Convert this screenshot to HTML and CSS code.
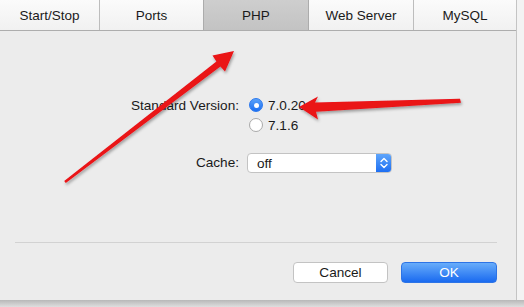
FILE: index.html
```html
<!DOCTYPE html>
<html>
<head>
<meta charset="utf-8">
<link rel="stylesheet" href="styles.css">
</head>
<body>
<div class="stage">
  <div class="window">
    <div class="tabs">
      <div class="tab t1">Start/Stop</div>
      <div class="tab t2">Ports</div>
      <div class="tab t3 selected">PHP</div>
      <div class="tab t4">Web Server</div>
      <div class="tab t5">MySQL</div>
    </div>
    <div class="content">
      <div class="form">
        <div class="label">Standard Version:</div>
        <div class="radios">
          <div class="radio-row"><span class="radio on"></span><span>7.0.20</span></div>
          <div class="radio-row"><span class="radio"></span><span>7.1.6</span></div>
        </div>
        <div class="label cache-label">Cache:</div>
        <div class="select">
          <span class="select-text">off</span>
          <span class="stepper">
            <svg width="16" height="20" viewBox="0 0 16 20"><path d="M5 8.5 L8 5.5 L11 8.5 M5 11.5 L8 14.5 L11 11.5" fill="none" stroke="#fff" stroke-width="1.4" stroke-linecap="round" stroke-linejoin="round"/></svg>
          </span>
        </div>
      </div>
    </div>
    <div class="divider"></div>
    <div class="buttons">
      <div class="btn cancel">Cancel</div>
      <div class="btn ok">OK</div>
    </div>
  </div>
  <div class="shadow"></div>
</div>
<svg class="arrows" width="524" height="307" viewBox="0 0 524 307">
  <defs>
    <filter id="ds" x="-10%" y="-10%" width="130%" height="130%">
      <feDropShadow dx="1" dy="2" stdDeviation="1.5" flood-color="#000" flood-opacity="0.35"/>
    </filter>
  </defs>
  <polygon filter="url(#ds)" fill="#ea1219" points="234,51 212.5,55.5 216.4,61.5 64.2,181 65.8,183 220.4,66.5 225,71.5"/>
  <polygon filter="url(#ds)" fill="#ea1219" points="299,107 318,96.5 315,102.5 460,98.8 461,102.8 316,111.8 318,119.5"/>
</svg>
</body>
</html>
```

FILE: styles.css
```css
html, body {
  margin: 0;
  padding: 0;
}
body {
  width: 524px;
  height: 307px;
  overflow: hidden;
  background: #f3f3f3;
  font-family: "Liberation Sans", Arial, sans-serif;
  font-size: 13.6px;
  color: #1a1a1a;
  position: relative;
}
.stage {
  display: flex;
  flex-direction: column;
  height: 307px;
}
.window {
  width: 516px;
  height: 300px;
  border-right: 1px solid #c4c4c4;
  background: #ececec;
  display: flex;
  flex-direction: column;
}
.shadow {
  flex: 1;
  width: 524px;
  background: linear-gradient(#b8b8b8, #dedede);
}
.tabs {
  display: flex;
  height: 30px;
  border-bottom: 1px solid #adadad;
  font-size: 13.5px;
}
.tab {
  display: flex;
  align-items: center;
  justify-content: center;
  background: linear-gradient(#fbfbfb, #f1f1f1);
  border-left: 1px solid #bdbdbd;
  box-sizing: border-box;
}
.t1 { width: 99px; border-left: none; }
.t2 { width: 104px; }
.t3 { width: 105px; }
.t4 { width: 105px; }
.t5 { flex: 1; }
.tab.selected {
  background: linear-gradient(#cecece, #c3c3c3);
  border-left-color: #acacac;
}
.tab.selected + .tab {
  border-left-color: #acacac;
}
.content {
  flex: 1;
  padding-top: 64px;
}
.form {
  display: grid;
  grid-template-columns: 239px auto;
  column-gap: 8px;
  row-gap: 18px;
  align-items: start;
}
.label {
  text-align: right;
  line-height: 20px;
  margin-top: 1px;
}
.cache-label {
  margin-top: 0;
}
.radios {
  display: flex;
  flex-direction: column;
}
.radio-row {
  display: flex;
  align-items: center;
  height: 20px;
  gap: 5px;
  padding-left: 2px;
}
.radio {
  width: 14px;
  height: 14px;
  box-sizing: border-box;
  border-radius: 50%;
  background: #fff;
  border: 1px solid #a9a9a9;
  display: flex;
  align-items: center;
  justify-content: center;
}
.radio.on {
  background: linear-gradient(#5ba2f9, #1c6ff2);
  border-color: #2a78ee;
}
.radio.on::after {
  content: "";
  width: 5px;
  height: 5px;
  border-radius: 50%;
  background: #fff;
}
.select {
  width: 145px;
  height: 20px;
  box-sizing: border-box;
  background: #fff;
  border: 1px solid #c3c3c3;
  border-radius: 4px;
  display: flex;
  align-items: center;
  overflow: hidden;
}
.select-text {
  flex: 1;
  padding-left: 9px;
}
.stepper {
  width: 16px;
  height: 20px;
  margin-right: -1px;
  background: linear-gradient(#62a8fb, #1a6cf2);
  display: flex;
}
.divider {
  height: 1px;
  margin: 0 19px 0 15px;
  background: #d2d2d2;
}
.buttons {
  display: flex;
  justify-content: flex-end;
  gap: 13px;
  padding: 19px 19px 17px 0;
}
.btn {
  height: 21px;
  box-sizing: border-box;
  border-radius: 4px;
  display: flex;
  align-items: center;
  justify-content: center;
}
.cancel {
  width: 95px;
  background: #fff;
  border: 1px solid #c3c3c3;
}
.ok {
  width: 96px;
  background: linear-gradient(#68adfa, #1a6af0);
  border: 1px solid #2d74e6;
  color: #fff;
}
.arrows {
  position: absolute;
  left: 0;
  top: 0;
  pointer-events: none;
}
```
